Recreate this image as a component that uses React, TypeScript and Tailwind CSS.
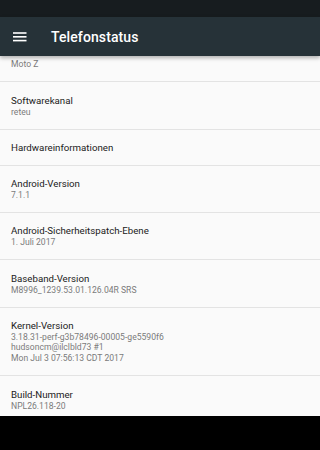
import React from "react";

type Item = { title: string; lines?: string[]; h: string };

const items: Item[] = [
  { title: "Modell", lines: ["Moto Z"], h: "h-[47.3px]" },
  { title: "Softwarekanal", lines: ["reteu"], h: "h-[47.3px]" },
  { title: "Hardwareinformationen", h: "h-[36px]" },
  { title: "Android-Version", lines: ["7.1.1"], h: "h-[47.3px]" },
  { title: "Android-Sicherheitspatch-Ebene", lines: ["1. Juli 2017"], h: "h-[47.5px]" },
  { title: "Baseband-Version", lines: ["M8996_1239.53.01.126.04R SRS"], h: "h-[47.3px]" },
  {
    title: "Kernel-Version",
    lines: [
      "3.18.31-perf-g3b78496-00005-ge5590f6",
      "hudsoncm@ilclbld73 #1",
      "Mon Jul 3 07:56:13 CDT 2017",
    ],
    h: "h-[68.5px]",
  },
  { title: "Build-Nummer", lines: ["NPL26.118-20"], h: "h-[47.3px]" },
];

export default function App() {
  return (
    <div
      className="w-full h-[450px] flex flex-col bg-[#fafafa] overflow-hidden"
      style={{ fontFamily: "Roboto, 'Noto Sans', sans-serif" }}
    >
      <div className="h-[17px] shrink-0 bg-[#171c1f]" />
      <div className="h-[39px] shrink-0 bg-[#263238] flex items-center relative z-10 shadow-[0_2px_4px_rgba(0,0,0,0.3)]">
        <div className="w-[51px] flex items-center pl-[13px]">
          <svg width="14" height="10" viewBox="0 0 14 10">
            <rect x="0" y="0.2" width="13.5" height="1.6" fill="#fff" />
            <rect x="0" y="4" width="13.5" height="1.6" fill="#fff" />
            <rect x="0" y="7.8" width="13.5" height="1.6" fill="#fff" />
          </svg>
        </div>
        <div className="text-white text-[14px] font-medium leading-none tracking-[0.1px]">
          Telefonstatus
        </div>
      </div>
      <div className="flex-1 overflow-hidden">
        <div className="-mt-[21px]">
          {items.map((it, i) => (
            <div
              key={i}
              className={`${it.h} border-b border-[#e3e3e3] pl-[11px] pt-[11.4px] box-border`}
            >
              <div className="text-[9.7px] leading-[13px] text-[#212121]">{it.title}</div>
              {it.lines?.map((l, j) => (
                <div key={j} className="text-[8.6px] leading-[10.3px] text-[#7a7a7a]">
                  {l}
                </div>
              ))}
            </div>
          ))}
        </div>
      </div>
      <div className="h-[34px] shrink-0 bg-black" />
    </div>
  );
}
